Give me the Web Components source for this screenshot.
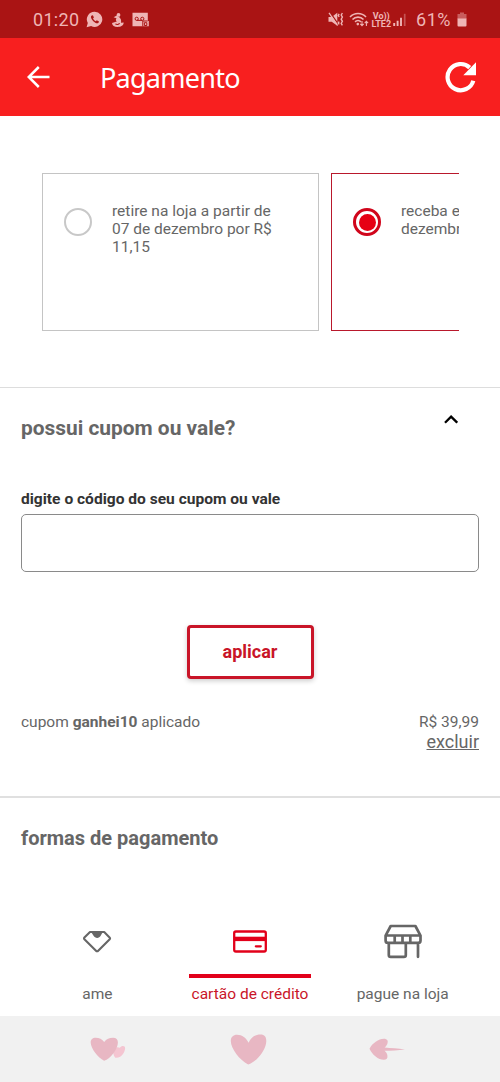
<!DOCTYPE html>
<html lang="pt-BR">
<head>
<meta charset="utf-8">
<title>Pagamento</title>
<style>
  body { margin: 0; background: #fff; font-family: Roboto, "Liberation Sans", sans-serif; color: #666; }
</style>
</head>
<body>
<payment-page></payment-page>

<script>
(function() {

// inline drawings, [viewBox width, viewBox height, markup]
const ICONS = {
  whatsapp: [17, 17, '<path fill="currentColor" d="M8.7.8a7.6 7.6 0 1 1-3.6 14.3L.6 16.3l1.2-4.2A7.6 7.6 0 0 1 8.7.8z"/><path d="M5.3 4.7c-1 1.3.2 3.8 2 5.5s4.1 2.7 5.2 1.5l.5-1.2-2.2-1.2-1 1c-1.4-.5-2.3-1.5-2.8-2.7l.9-1-1-2.3z" fill="#aa1414"/>'],
  seal: [14, 16, '<g fill="currentColor"><circle cx="7.5" cy="2.9" r="1.9"/><path d="M5.8 3.5 2.6 5.3l2.9.9c-1 1.2-.8 2.4.3 3.4L1 10.9c.2 2.6 2.3 4 5.6 4 3.6 0 5.9-1.4 6.1-4.4l-2.7.2c.5-2.4-.3-4.1-1.4-5.2z"/></g><path d="M4.4 11.9c1.3 1 3.4.7 4.2-.6" fill="none" stroke="#aa1414" stroke-width="1.1"/>'],
  voicemail: [17, 15, '<path fill="currentColor" d="M.5.8h15.3V9h1v5.2H.5z"/><g fill="none" stroke="#aa1414" stroke-width="1"><circle cx="4.7" cy="6.8" r="1.6"/><circle cx="10.3" cy="6.8" r="1.6"/><path d="M4.7 8.4h5.6M10.8 14.3V9h4.8M12.4 10.7h2.4v2.8h-2.4z"/></g>'],
  mute: [16, 15, '<path fill="currentColor" d="M.5 5h3.2L9.3.8v13L3.7 9.8H.5z"/><path d="m2.3.6 8.6 12.6" stroke="#aa1414" stroke-width="1.2"/><path d="m1 .9 8.6 12.6" stroke="currentColor" stroke-width="1.3"/><path d="m11.2 2-1 1.4 1 1.4M11.2 9.6l-1 1.4 1 1.4M14.4 1l-1.2 2 1.2 2.1-1.2 2.1 1.2 2.1-1.2 2.1 1.2 2" stroke="currentColor" stroke-width="1.4" fill="none"/>'],
  wifi: [20, 15, '<g fill="none" stroke="currentColor" stroke-width="1.6"><path d="M1 5c4.5-4.7 11.5-4.7 16 0M3.5 7.5c3-3.2 8-3.2 11 0M6.1 9.9c1.6-1.8 4.2-1.8 5.8 0"/></g><circle cx="8.8" cy="12.1" r="1.3" fill="currentColor"/><path d="M13 9v4.4m-1.7-1.6 1.7 1.8 1.7-1.8M17.4 14V9.5m-1.7 1.7 1.7-1.8 1.7 1.8" fill="none" stroke="currentColor" stroke-width="1.1"/>'],
  signal: [14, 14, '<path d="M1.2 10v3M4.6 7.8V13M8 4.8V13" stroke="currentColor" stroke-width="1.9"/><path d="M11.7.8V13" stroke="currentColor" stroke-width="1.7" opacity=".4"/>'],
  battery: [10, 15, '<path d="M3 .5h4v1.6h2.5v5H.5v-5H3z" fill="currentColor" opacity=".45"/><path d="M.5 6.4h9v7a1 1 0 0 1-1 1h-7a1 1 0 0 1-1-1z" fill="currentColor"/>'],
  back: [24, 22, '<path d="M11.8 1 1.7 11l10.1 10M2 11h20.5" fill="none" stroke="#fff" stroke-width="2.5"/>'],
  reload: [32, 32, '<path d="M28.3 19.7A13.1 13.1 0 1 1 24.7 6.6" fill="none" stroke="#fff" stroke-width="4.2"/><path d="M31 1.3v12.9H18.3z" fill="#fff"/>'],
  chevron: [14, 9, '<path d="M1 7.7 7.1 1.6l6.1 6.1" fill="none" stroke="#000" stroke-width="2.3"/>'],
  ame: [30, 24, '<path d="M8 2h14.2l5.6 5.7c.4.5.3 1.1-.1 1.6L16.2 20.7c-.7.8-1.5.8-2.2 0L2.4 9.2c-.5-.5-.5-1.1 0-1.6z" fill="none" stroke="currentColor" stroke-width="2.1" stroke-linejoin="round"/><path d="M8.3 2.2h13.3c-1 0-1.7 1.1-2.6 3.1-2.1 3.6-5.6 3.6-7.8 0-.8-1.6-1.5-3.1-2.9-3.1z" fill="currentColor"/>'],
  card: [36, 24, '<rect x="2.2" y="1.5" width="31.6" height="20" rx="1.7" fill="none" stroke="currentColor" stroke-width="2.3"/><path d="M2 8.9h32" stroke="currentColor" stroke-width="4.4"/><path d="M23.8 16.3h5" stroke="currentColor" stroke-width="2.2" stroke-linecap="round"/>'],
  store: [38, 36, '<g fill="none" stroke="currentColor" stroke-width="2.7" stroke-linejoin="round" stroke-linecap="round"><path d="M6.7 2h24.7l5.1 9.6v4.8c0 1.5-.9 2.5-2.4 2.5H4c-1.5 0-2.4-1-2.4-2.5v-4.8zM1.8 11.5h34.4M10.7 12v6.5M18.5 12v6.5M26.3 12v6.5M4.8 19v12c0 1.2.7 1.9 1.9 1.9h13.2c1.2 0 1.9-.7 1.9-1.9V19M34 19v13.8"/></g>'],
  hearts: [37, 25, '<path d="M25.3 20.7c5 1.2 9.5-4.8 9.8-9.2.2-3-3.5-3.1-5.3-.7-2-1.2-4.8-.4-6 2.2-1 2.4-.5 5.8 1.5 7.7z" fill="#f4c5d1"/><path d="M14.1 23.8C8 20.7.9 11.5.7 5.8.6 2.5 2.7.8 5.6.8c3.6 0 6.7 1.4 8.6 4.3C16.4 2 19.3.8 23 .8c3.3 0 4.9 1.8 4.9 4.6 0 6.6-7.1 16-13.8 18.4z" fill="#e8b7c3"/>'],
  heart: [37, 31, '<path d="M18.2 30.4C9.7 26.2.8 14.2.8 6.9.8 3 3.2.7 7 .7c5.2 0 9.2 3 11.6 8C21.1 3.4 25.1.6 30.5.6c4 0 5.8 2.4 5.8 6.3 0 8-8.9 20.7-18.1 23.5z" fill="#e8b7c3"/>'],
  arrow: [37, 23, '<path d="M.5 10.8C3.2 5.2 9.7.8 14.8.8c3.7 0 4.7 2.3 3.5 5.1-.7 1.6-1.6 2.8-2.8 3.5C22 10 29 10.3 36 11.4c-7 .8-14 1.3-20.5 1.3 1.5 1.2 2.6 2.9 2.9 4.7.4 2.9-.8 4.3-3.6 4.4C9.6 21.9 3.3 17 .5 10.8z" fill="#e8b7c3"/>']
};

class UiIcon extends HTMLElement {
  connectedCallback() {
    const [w, h, shape] = ICONS[this.getAttribute('name')];
    this.attachShadow({mode: 'open'}).innerHTML = `
      <style>
        :host { display: block; flex: none; width: ${w}px; height: ${h}px; }
        svg { display: block; }
      </style>
      <svg width="${w}" height="${h}" viewBox="0 0 ${w} ${h}" aria-hidden="true">${shape}</svg>`;
  }
}

class StatusBar extends HTMLElement {
  constructor() {
    super();
    this.attachShadow({mode: 'open'}).innerHTML = `
      <style>
        :host { display: flex; justify-content: space-between; align-items: center; box-sizing: border-box;
          height: 38px; padding: 1px 33px 0 33px; background: #aa1414; color: #efb5b5; }
        div { display: flex; align-items: center; }
        .time { font-size: 18px; line-height: 22px; letter-spacing: .3px; margin: 1px 7px 0 0; }
        .battery { font-size: 18px; line-height: 22px; letter-spacing: .5px; margin: 1px 6px 0 9px; }
        .volte { font-size: 9px; line-height: 8px; font-weight: 700; text-align: center; margin: 0 2px; }
      </style>
      <div>
        <span class="time">01:20</span>
        <ui-icon name="whatsapp"></ui-icon>
        <ui-icon name="seal" style="margin: 0 7px 0 8px"></ui-icon>
        <ui-icon name="voicemail"></ui-icon>
      </div>
      <div>
        <ui-icon name="mute" style="margin-right: 5px"></ui-icon>
        <ui-icon name="wifi"></ui-icon>
        <span class="volte">Vo))<br>LTE2</span>
        <ui-icon name="signal"></ui-icon>
        <span class="battery">61%</span>
        <ui-icon name="battery"></ui-icon>
      </div>`;
  }
}

class AppHeader extends HTMLElement {
  constructor() {
    super();
    this.attachShadow({mode: 'open'}).innerHTML = `
      <style>
        :host { display: flex; align-items: center; box-sizing: border-box; height: 78px;
          padding: 0 23px 0 27px; background: #f81f1f; color: #fff; }
        h1 { flex: 1; margin: 2px 0 0 49px; font: 400 27px/36px "Noto Sans", "Open Sans", sans-serif; letter-spacing: -.75px; }
      </style>
      <ui-icon name="back"></ui-icon>
      <h1><slot></slot></h1>
      <ui-icon name="reload"></ui-icon>`;
  }
}

class DeliveryOption extends HTMLElement {
  constructor() {
    super();
    this.attachShadow({mode: 'open'}).innerHTML = `
      <style>
        :host { display: flex; flex: none; align-items: flex-start; box-sizing: border-box; width: 277px; height: 158px;
          padding: 28px 30px 0 21px; border: 1px solid #c4c4c4; font-size: 15.5px; line-height: 18px; }
        :host([checked]) { border-color: #b9182c; }
        .radio { flex: none; box-sizing: border-box; width: 28px; height: 28px; margin: 6px 20px 0 0;
          border: 2.5px solid #c8c8c8; border-radius: 50%; }
        :host([checked]) .radio { border: 3px solid #d0051b; background: #e60014; background-clip: content-box; padding: 2.5px; }
      </style>
      <span class="radio"></span>
      <span><slot></slot></span>`;
  }
}

class PageSection extends HTMLElement {
  constructor() {
    super();
    this.attachShadow({mode: 'open'}).innerHTML = `
      <style>
        :host { display: block; flex: none; box-sizing: border-box; padding: 0 21px; }
        header { display: flex; justify-content: space-between; align-items: flex-start; }
        h2 { margin: 0; font-size: var(--title-size, 20px); line-height: 24px; font-weight: 700; color: #666; }
      </style>
      <header><h2><slot name="title"></slot></h2><slot name="action"></slot></header>
      <slot></slot>`;
  }
}

class CouponForm extends HTMLElement {
  constructor() {
    super();
    this.attachShadow({mode: 'open'}).innerHTML = `
      <style>
        :host { display: flex; flex-direction: column; padding-top: 50px; }
        label { font-size: 15.55px; line-height: 18px; font-weight: 700; color: #333; }
        input { box-sizing: border-box; width: 100%; height: 58px; margin: 6px 0 53px; padding: 0 14px;
          border: 1px solid #8a8a8a; border-radius: 5px; background: #fff; font: inherit; }
        button { align-self: center; width: 127px; height: 54px; padding: 0; border: 3px solid #c91528; border-radius: 4px;
          background: #fff; color: #c91528; font: 700 18px/22px Roboto, sans-serif;
          box-shadow: 0 2px 5px rgba(0, 0, 0, .2); }
        .applied { display: flex; justify-content: space-between; margin-top: 34px; font-size: 15.5px; line-height: 18px; }
        .value { text-align: right; }
        a { display: block; font-size: 18px; line-height: 22px; text-decoration: underline; }
      </style>
      <label for="code">digite o código do seu cupom ou vale</label>
      <input id="code" type="text">
      <button type="button">aplicar</button>
      <div class="applied">
        <span class="name">cupom <b>ganhei10</b> aplicado</span>
        <span class="value">R$ 39,99<a>excluir</a></span>
      </div>`;
  }
}

class PaymentTab extends HTMLElement {
  constructor() {
    super();
    this.attachShadow({mode: 'open'}).innerHTML = `
      <style>
        :host { display: flex; flex-direction: column; align-items: center; flex: 1; color: #666;
          font-size: 15.5px; line-height: 18px; }
        .icon { display: flex; align-items: center; height: 58px; box-sizing: border-box; padding-bottom: 7px; }
        .bar { width: 122px; height: 4px; margin-bottom: 7px; }
        :host([active]) { color: #e2001a; }
        :host([active]) .bar { background: #e2001a; }
        :host([active]) .label { color: #c91528; }
      </style>
      <span class="icon"><slot name="icon"></slot></span>
      <span class="bar"></span>
      <span class="label"><slot></slot></span>`;
  }
}

class BottomNav extends HTMLElement {
  constructor() {
    super();
    this.attachShadow({mode: 'open'}).innerHTML = `
      <style>
        :host { display: flex; flex: none; align-items: center; justify-content: space-between; box-sizing: border-box;
          height: 66px; padding: 1px 94px 0 90px; background: #f1f1f1; }
      </style>
      <ui-icon name="hearts"></ui-icon>
      <ui-icon name="heart"></ui-icon>
      <ui-icon name="arrow"></ui-icon>`;
  }
}

class PaymentPage extends HTMLElement {
  constructor() {
    super();
    this.attachShadow({mode: 'open'}).innerHTML = `
      <style>
        :host { display: flex; flex-direction: column; width: 500px; height: 1082px; overflow: hidden; }
        .delivery { display: flex; flex: none; gap: 12px; box-sizing: border-box; height: 271px; margin: 0 41px;
          padding: 57px 0 0 1px; overflow: hidden; }
        .coupon { height: 409px; padding-top: 28px; border-top: 1px solid #ddd; --title-size: 20.9px; }
        .coupon ui-icon { margin: -1px 21px 0 0; }
        .methods { height: 220px; padding-top: 28px; border-top: 2px solid #e0e0e0; }
        .tabs { display: flex; margin-top: 66px; }
      </style>
      <status-bar></status-bar>
      <app-header>Pagamento</app-header>
      <div class="delivery">
        <delivery-option>retire na loja a partir de 07 de dezembro por R$ 11,15</delivery-option>
        <delivery-option checked>receba em<br>dezembro</delivery-option>
      </div>
      <page-section class="coupon">
        <span slot="title">possui cupom ou vale?</span>
        <ui-icon slot="action" name="chevron"></ui-icon>
        <coupon-form></coupon-form>
      </page-section>
      <page-section class="methods">
        <span slot="title">formas de pagamento</span>
        <div class="tabs">
          <payment-tab><ui-icon slot="icon" name="ame"></ui-icon>ame</payment-tab>
          <payment-tab active><ui-icon slot="icon" name="card"></ui-icon>cartão de crédito</payment-tab>
          <payment-tab><ui-icon slot="icon" name="store"></ui-icon>pague na loja</payment-tab>
        </div>
      </page-section>
      <bottom-nav></bottom-nav>`;
  }
}

customElements.define('ui-icon', UiIcon);
customElements.define('status-bar', StatusBar);
customElements.define('app-header', AppHeader);
customElements.define('delivery-option', DeliveryOption);
customElements.define('page-section', PageSection);
customElements.define('coupon-form', CouponForm);
customElements.define('payment-tab', PaymentTab);
customElements.define('bottom-nav', BottomNav);
customElements.define('payment-page', PaymentPage);

}());
</script>
</body>
</html>
